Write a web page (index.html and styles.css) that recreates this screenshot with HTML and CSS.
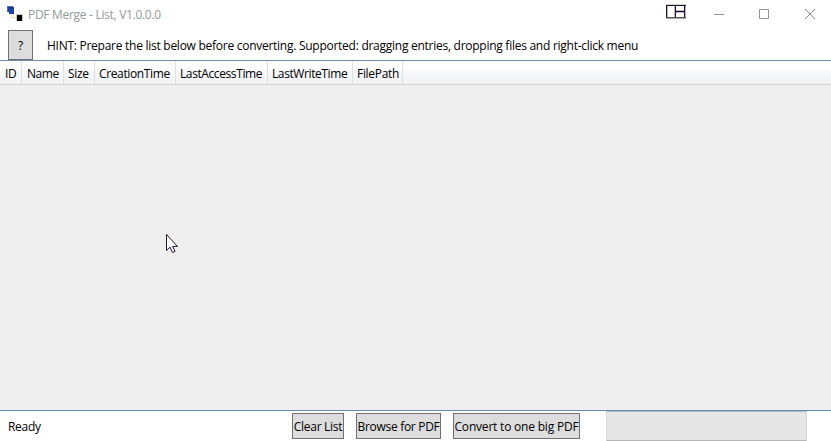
FILE: index.html
```html
<!DOCTYPE html>
<html lang="en">
<head>
<meta charset="utf-8">
<title>PDF Merge - List, V1.0.0.0</title>
<link rel="stylesheet" href="styles.css">
</head>
<body>
<div class="window">
  <header class="titlebar">
    <svg class="app-icon" width="16" height="16" viewBox="0 0 16 16" shape-rendering="crispEdges">
      <path d="M4 8h1v3h4v1H4z" fill="#f3dfb4"/>
      <path d="M0 0h6v1h1v7H2V6H0z" fill="#1b3f9c"/>
      <path d="M0 0h6v1H1v5H0z" fill="#5b6c96"/>
      <path d="M9 8h7v7H9z" fill="#c9c7bd"/>
      <path d="M10 9h5v6h-5z" fill="#000"/>
    </svg>
    <span class="title">PDF Merge - List, V1.0.0.0</span>
    <svg class="layout-icon" width="20" height="15" viewBox="0 0 20 15" shape-rendering="crispEdges">
      <path d="M0 0h20v1H0z" fill="#d0cdc8"/>
      <path d="M1 2h1v11H1zM8 2h1v11H8zM19 1h1v13h-1zM10 8h8v1h-8zM10 6h8v1h-8z" fill="#b9aebd"/>
      <path d="M0 1h20v1H0zM0 1h1v13H0zM9 1h1v13H9zM18 1h1v13h-1zM9 7h10v1H9z" fill="#20152d"/>
      <path d="M0 13h20v1H0z" fill="#55505a"/><path d="M0 14h20v1H0z" fill="#aaa"/>
    </svg>
    <div class="controls">
      <svg width="10" height="10" viewBox="0 0 10 10"><path d="M0 5.500h10" stroke="#8f979c"/></svg>
      <svg width="10" height="10" viewBox="0 0 10 10"><path d="M.5.500h9v9h-9z" fill="none" stroke="#8f979c"/></svg>
      <svg class="close" width="10" height="10" viewBox="0 0 10 10"><path d="M0 0l10 10M10 0L0 10" stroke="#80888e"/></svg>
    </div>
  </header>
  <div class="toolbar">
    <button class="button help">?</button>
    <span class="hint">HINT: Prepare the list below before converting. Supported: dragging entries, dropping files and right-click menu</span>
  </div>
  <main class="list">
    <div class="columns">
      <div class="col id"><span>ID</span></div>
      <div class="col name"><span>Name</span></div>
      <div class="col size"><span>Size</span></div>
      <div class="col created"><span>CreationTime</span></div>
      <div class="col accessed"><span>LastAccessTime</span></div>
      <div class="col written"><span>LastWriteTime</span></div>
      <div class="col path"><span>FilePath</span></div>
      <div class="filler"></div>
    </div>
  </main>
  <footer class="statusbar">
    <span class="status">Ready</span>
    <button class="button clear">Clear List</button>
    <button class="button browse">Browse for PDF</button>
    <button class="button convert">Convert to one big PDF</button>
    <div class="progress"></div>
  </footer>
  <svg class="cursor" width="13" height="20" viewBox="0 0 13 20">
    <path d="M.5.500v16l3.600-3.300 2.400 5.300 2.500-1.100-2.300-5h4.800z" fill="#fff" stroke="#20152d"/>
  </svg>
</div>
</body>
</html>
```

FILE: styles.css
```css
* { box-sizing: border-box; }
body {
  margin: 0;
  font: 12px/16px "Open Sans", "Noto Sans", sans-serif;
  letter-spacing: -0.3px;
  color: #000;
}
.window {
  position: relative;
  display: flex;
  flex-direction: column;
  width: 831px;
  height: 441px;
  overflow: hidden;
  background: #fff;
  white-space: nowrap;
}
.titlebar { display: flex; height: 30px; padding-left: 7px; }
.app-icon { margin-top: 6px; }
.title { margin: 7px 0 0 5px; color: #929c98; }
.layout-icon { margin: 4px 28px 0 auto; }
.controls { display: flex; gap: 35px; padding: 9px 16px 0 0; }
.controls svg { overflow: visible; }
.controls .close { margin-left: 1px; }
.toolbar { display: flex; align-items: center; height: 30px; padding-left: 8px; }
.button {
  flex: none;
  padding: 0;
  border: 1px solid #707070;
  background: #ddd;
  color: #000;
  font: inherit;
  letter-spacing: inherit;
  text-align: center;
}
.help { width: 25px; height: 30px; padding-top: 2px; }
.hint { margin: 2px 0 0 14px; letter-spacing: -0.265px; }
.list {
  flex: 1;
  border: solid #688caf;
  border-width: 1px 0;
  background: #efefef;
}
.columns { display: flex; height: 24px; border-bottom: 1px solid #d5d5d5; background: #fff; }
.col {
  flex: none;
  padding: 5px 0 0 5px;
  border-right: 1px solid #dfe0e2;
  background: linear-gradient(#fff 0 40%, #f7f8fa 40%, #f1f2f4);
}
.id { width: 22px; }
.name { width: 42px; padding-left: 5px; letter-spacing: -0.45px; }
.size { width: 31px; padding-left: 4px; }
.created { width: 81px; padding-left: 4px; letter-spacing: -0.37px; }
.accessed { width: 92px; padding-left: 4px; letter-spacing: -0.4px; }
.written { width: 85px; padding-left: 4px; letter-spacing: -0.4px; }
.path { width: 50px; padding-left: 4px; }
.filler { flex: 1; background: linear-gradient(#fff 0 40%, #f7f8fa 40%, #f1f2f4); }
.statusbar { display: flex; height: 30px; padding-left: 8px; }
.status { width: 284px; padding-top: 8px; }
.statusbar .button { height: 26px; margin: 2px 12px 0 0; padding-top: 2px; }
.clear { width: 52px; }
.browse { width: 85px; }
.convert { width: 127px; letter-spacing: -0.2px; }
.progress {
  width: 201px;
  height: 30px;
  margin-left: 14px;
  border: 1px solid #d5d9da;
  border-top-color: #b3bac6;
  border-bottom-color: #b7b7b7;
  background: #e6e6e6;
}
.cursor { position: absolute; left: 166px; top: 234px; }
```
